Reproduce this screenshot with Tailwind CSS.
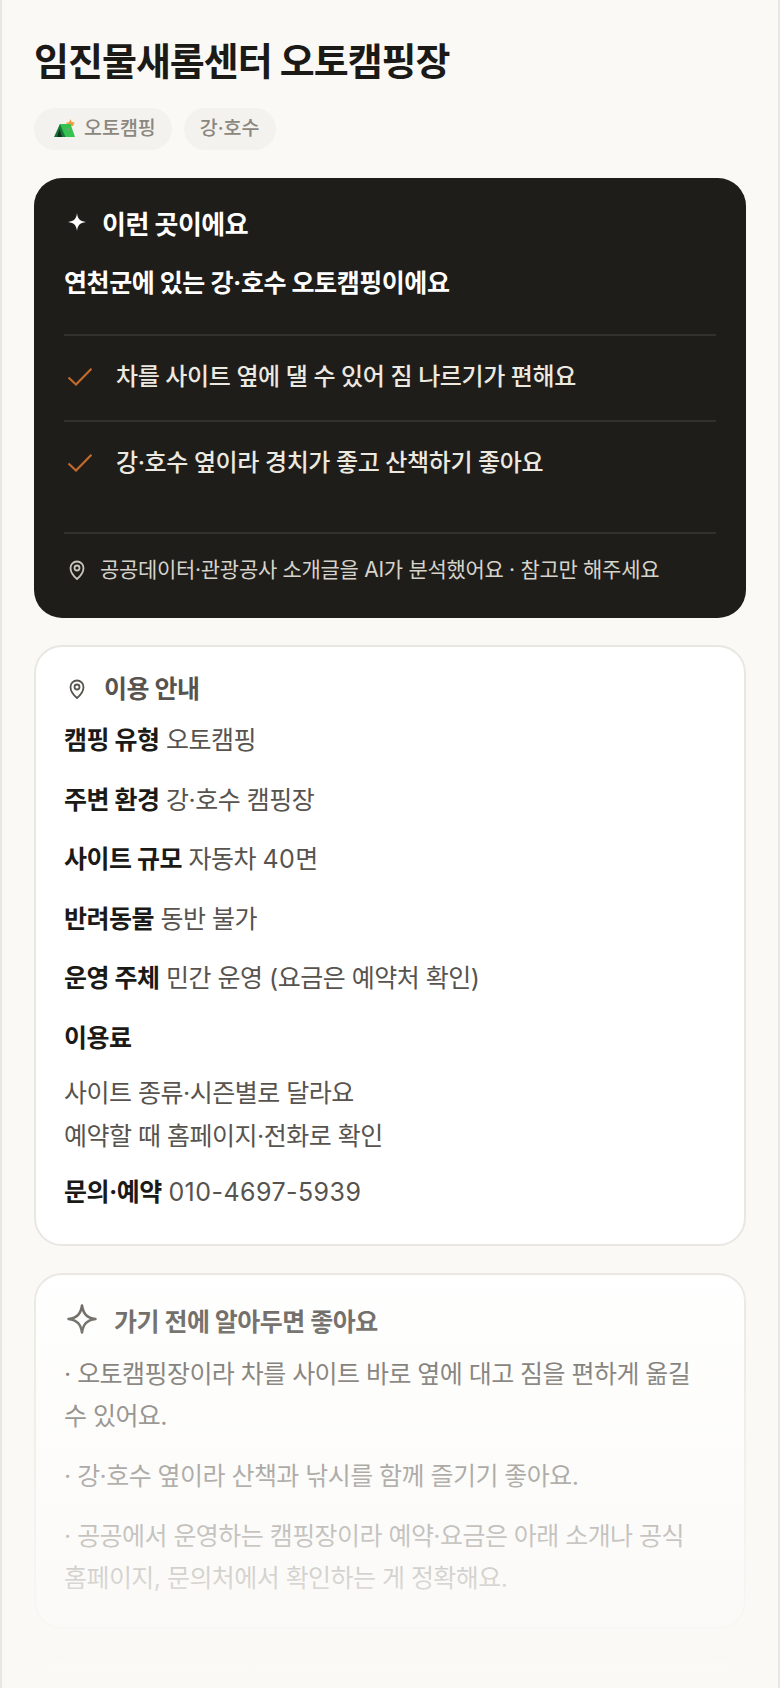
<!DOCTYPE html>
<html lang="ko">
<head>
    <meta charset="UTF-8">
    <meta name="viewport" content="width=device-width, initial-scale=1.0">
    <title>임진물새롬센터 오토캠핑장</title>
    <script src="https://cdn.jsdelivr.net/npm/@tailwindcss/browser@4"></script>
</head>
<body class="bg-[#faf9f6] font-['Inter','Noto_Sans_CJK_KR',sans-serif] text-[#1f1d1a]">
<div class="relative h-[1688px] overflow-hidden border-x-2 border-[#e8e7e1]">
    <main class="px-[32px] pt-[36px]">
        <h1 class="text-[38px] leading-[50px] font-bold tracking-[-1px] text-[#1c1a17]">임진물새롬센터 오토캠핑장</h1>

        <div class="mt-[22px] flex gap-[12px]">
            <span class="flex h-[42px] items-center gap-[9px] rounded-full bg-[#f3f2ee] pl-[20px] pr-[16px] text-[19.500px] font-medium text-[#8b877f]">
                <svg width="21" height="18" viewBox="0 0 21 18" class="-mt-[2px] shrink-0">
                    <path d="M12 3.500c2 .5 3.500 0 4.500-3.500l1 3 3 .5-1.500 3.500h-5z" fill="#f59a3c"/>
                    <path d="M6 5h10.500L21 18H1z" fill="#35c24f"/>
                    <path d="M6 5l5.500 13H0z" fill="#17763a"/>
                    <path d="M5.500 10l2.500 8H3z" fill="#10331d"/>
                    <path d="M12 9h3l1 3h-3z" fill="#5fae70"/>
                </svg>
                오토캠핑
            </span>
            <span class="flex h-[42px] items-center rounded-full bg-[#f3f2ee] px-[16px] text-[19.500px] font-medium text-[#8b877f]">강·호수</span>
        </div>

        <!-- summary card -->
        <section class="mt-[28px] rounded-[28px] bg-[#1f1d1a] px-[30px] pt-[30px] pb-[32px] text-white">
            <div class="flex items-center gap-[16px]">
                <svg width="18" height="18" viewBox="0 0 18 18" fill="#fff" class="ml-[4px] -mt-[7px] shrink-0"><path d="M9 0c.6 5.500 2.500 8.200 9 9-6.500.8-8.400 3.500-9 9-.6-5.500-2.500-8.200-9-9 6.500-.8 8.400-3.500 9-9z"/></svg>
                <h2 class="text-[26px] leading-[34px] font-bold tracking-[-0.5px]">이런 곳이에요</h2>
            </div>
            <p class="mt-[24px] pb-[34px] text-[25px] leading-[34px] font-bold tracking-[-0.43px] border-b-2 border-[#33312d]">연천군에 있는 강·호수 오토캠핑이에요</p>
            <div class="flex items-center gap-[24px] h-[86px] pb-[2px] border-b-2 border-[#33312d]">
                <svg width="24" height="18" viewBox="0 0 24 18" fill="none" stroke="#c2692c" stroke-width="2.200" class="ml-[4px] shrink-0"><path d="M0.500 9.500L8 16.500L23.500 0.700"/></svg>
                <span class="text-[24px] font-medium tracking-[-0.4px] text-[#ece9e0]">차를 사이트 옆에 댈 수 있어 짐 나르기가 편해요</span>
            </div>
            <div class="flex items-center gap-[24px] h-[83px] pb-[2px]">
                <svg width="24" height="18" viewBox="0 0 24 18" fill="none" stroke="#c2692c" stroke-width="2.200" class="ml-[4px] shrink-0"><path d="M0.500 9.500L8 16.500L23.500 0.700"/></svg>
                <span class="text-[24px] font-medium tracking-[-0.4px] text-[#ece9e0]">강·호수 옆이라 경치가 좋고 산책하기 좋아요</span>
            </div>
            <div class="mt-[27px] flex items-center gap-[14px] border-t-2 border-[#33312d] pt-[20px]">
                <svg width="18" height="20" viewBox="0 0 18 20" fill="none" stroke="#c9c6bd" stroke-width="1.800" class="ml-[4px] shrink-0"><path d="M9 19s-6.500-5.500-6.500-11a6.500 6.500 0 0 1 13 0c0 5.500-6.500 11-6.500 11z"/><circle cx="9" cy="8" r="2.500"/></svg>
                <span class="text-[21px] leading-[32px] tracking-[-0.3px] text-[#d6d3ca]">공공데이터·관광공사 소개글을 AI가 분석했어요 · 참고만 해주세요</span>
            </div>
        </section>

        <!-- info card -->
        <section class="mt-[27px] rounded-[28px] border-2 border-[#e8e7e1] bg-white px-[28px] pt-[25px] pb-[30px]">
            <div class="flex items-center gap-[18px]">
                <svg width="18" height="20" viewBox="0 0 18 20" fill="none" stroke="#57534e" stroke-width="1.800" class="ml-[4px] shrink-0"><path d="M9 19s-6.500-5.500-6.500-11a6.500 6.500 0 0 1 13 0c0 5.500-6.500 11-6.500 11z"/><circle cx="9" cy="8" r="2.500"/></svg>
                <h2 class="text-[25px] leading-[34px] font-bold tracking-[-0.5px] text-[#57534e]">이용 안내</h2>
            </div>
            <dl class="mt-[13px] text-[25px] leading-[42.500px] tracking-[-0.5px] text-[#57534e]">
                <div class="mb-[17px]"><b class="text-[#1c1a17]">캠핑 유형</b> 오토캠핑</div>
                <div class="mb-[17px]"><b class="text-[#1c1a17]">주변 환경</b> 강·호수 캠핑장</div>
                <div class="mb-[17px]"><b class="text-[#1c1a17]">사이트 규모</b> 자동차 <span class="tracking-[0.45px]">40</span>면</div>
                <div class="mb-[17px]"><b class="text-[#1c1a17]">반려동물</b> 동반 불가</div>
                <div class="mb-[17px]"><b class="text-[#1c1a17]">운영 주체</b> 민간 운영 (요금은 예약처 확인)</div>
                <div class="mb-[13px]"><b class="text-[#1c1a17]">이용료</b></div>
                <div class="mb-[14px]">사이트 종류·시즌별로 달라요<br>예약할 때 홈페이지·전화로 확인</div>
                <div><b class="text-[#1c1a17]">문의·예약</b> <span class="tracking-[0.45px]">010-4697-5939</span></div>
            </dl>
        </section>

        <!-- tips card -->
        <section class="mt-[27px] rounded-[28px] border-2 border-[#e8e7e1] bg-white px-[28px] pt-[30px] pb-[28px]">
            <div class="flex items-start gap-[16px]">
                <svg width="32" height="32" viewBox="0 0 32 32" fill="none" stroke="#57534e" stroke-width="2.500" stroke-linejoin="round" class="ml-[2px] -mt-[2px] shrink-0"><path d="M16 2.500c1.200 8 4.500 12.300 13.500 13.500-9 1.200-12.300 5.500-13.500 13.500-1.200-8-4.500-12.300-13.500-13.500 9-1.200 12.300-5.500 13.500-13.500z"/></svg>
                <h2 class="text-[25px] leading-[34px] font-bold tracking-[-0.5px] text-[#57534e]">가기 전에 알아두면 좋아요</h2>
            </div>
            <div class="mt-[14px] text-[25px] leading-[42px] tracking-[-0.55px] break-keep text-[#57534e]">
                <p class="mb-[18px]">· 오토캠핑장이라 차를 사이트 바로 옆에 대고 짐을 편하게 옮길 수 있어요.</p>
                <p class="mb-[18px]">· 강·호수 옆이라 산책과 낚시를 함께 즐기기 좋아요.</p>
                <p>· 공공에서 운영하는 캠핑장이라 예약·요금은 아래 소개나 공식 홈페이지, 문의처에서 확인하는 게 정확해요.</p>
            </div>
        </section>

        <section class="mt-[27px] h-[200px] rounded-[28px] border-2 border-[#e8e7e1] bg-white"></section>
    </main>
    <!-- fade over the lower cards -->
    <div class="absolute inset-x-0 top-[1240px] bottom-0 bg-linear-to-b from-[#faf9f6]/0 to-[#faf9f6] to-97%"></div>
</div>
</body>
</html>
